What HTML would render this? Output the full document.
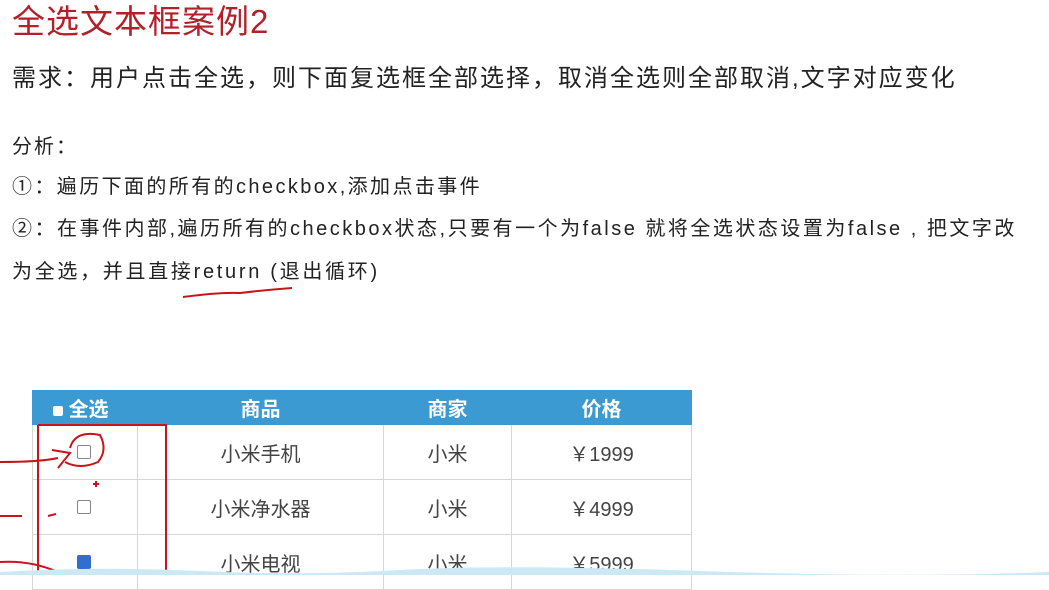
<!DOCTYPE html>
<html><head><meta charset="utf-8"><style>
body{margin:0;width:1049px;height:575px;background:#fff;position:relative;overflow:hidden;font-family:"Liberation Sans","Noto Sans CJK SC",sans-serif;color:#222}
.t{position:absolute;white-space:nowrap;line-height:1}
table{position:absolute;left:32px;top:390px;border-collapse:collapse;width:660px;table-layout:fixed;font-size:20px;color:#444}
th{background:#3a9ad1;color:#fff;height:33px;font-size:20px;padding:0;border:1px solid #3a9ad1}
td{height:54px;text-align:center;border:1px solid #d6d6d6;padding:0}
.cb{display:inline-block;width:12px;height:12px;border:1px solid #888;border-radius:2px;background:#fff;vertical-align:middle}
</style></head><body>
<div class="t" style="left:12px;top:5px;font-size:33px;color:#b3202a;letter-spacing:1px">全选文本框案例2</div>
<div class="t" style="left:12px;top:67px;font-size:24px;letter-spacing:2px">需求：用户点击全选，则下面复选框全部选择，取消全选则全部取消,文字对应变化</div>
<div class="t" style="left:12px;top:137px;font-size:20px;letter-spacing:2px">分析：</div>
<div class="t" style="left:12px;top:177px;font-size:20px;letter-spacing:2.4px">①：遍历下面的所有的checkbox,添加点击事件</div>
<div class="t" style="left:12px;top:219px;font-size:20px;letter-spacing:2.5px">②：在事件内部,遍历所有的checkbox状态,只要有一个为false 就将全选状态设置为false , 把文字改</div>
<div class="t" style="left:12px;top:262px;font-size:20px;letter-spacing:2.7px">为全选，并且直接return (退出循环)</div>
<table>
<colgroup><col style="width:105px"><col style="width:246px"><col style="width:128px"><col></colgroup>
<tr><th style="text-align:left;padding-left:20px"><span class="cb" style="width:10px;height:10px;border:none"></span> 全选</th><th>商品</th><th>商家</th><th>价格</th></tr>
<tr><td style="text-align:left;padding-left:44px"><span class="cb"></span></td><td>小米手机</td><td>小米</td><td>￥1999</td></tr>
<tr><td style="text-align:left;padding-left:44px"><span class="cb"></span></td><td>小米净水器</td><td>小米</td><td>￥4999</td></tr>
<tr><td style="text-align:left;padding-left:44px"><span class="cb" style="background:#2f6fd0;border-color:#2f6fd0"></span></td><td>小米电视</td><td>小米</td><td>￥5999</td></tr>
</table>
<svg style="position:absolute;left:0;top:0" width="1049" height="575">
<g fill="none" stroke="#c8141c" stroke-width="2">
<path d="M183 297 Q220 292 240 293 Q265 290 292 288"/>
<path d="M38 425 H166 V575 M38 425 V575"/>
<path d="M0 462 Q40 462 58 458 M52 450 L70 453 L58 468 M70 448 Q75 430 100 435 Q108 450 98 462 Q80 470 65 462"/>
<path d="M0 516 H22 M48 516 L56 514"/>
<path d="M0 562 Q30 560 58 572"/>
<path d="M96 481 V487 M93 484 H99"/>
</g>
<path d="M0 572 Q100 566 200 571 T400 570 T700 571 T1049 572 V575 H0Z" fill="#cde8f5"/>
</svg>
</body></html>
